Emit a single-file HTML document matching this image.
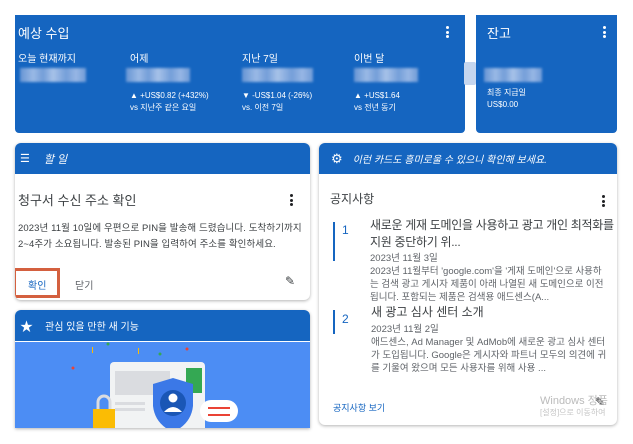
<!DOCTYPE html>
<html><head><meta charset="utf-8"><style>
*{margin:0;padding:0;box-sizing:border-box}
body{width:633px;height:444px;background:#fff;font-family:"Liberation Sans","Noto Sans CJK KR",sans-serif;position:relative;overflow:hidden;color:#202124}
.blue{background:#1565c0;color:#fff;position:absolute}
.card{position:absolute;background:#fff;border-radius:6px;box-shadow:0 1px 3px rgba(0,0,0,.3);overflow:hidden}
.hdr{background:#1565c0;color:#fff;height:31px;font-size:11px;font-style:italic;display:flex;align-items:center}
.abs{position:absolute}
.blur{position:absolute;height:14px;background:linear-gradient(90deg,#6f9ad6,#a9c3ea 20%,#7ea4db 35%,#b8cdee 50%,#7fa5dc 70%,#a6c0e9 85%,#7aa1da);filter:blur(1.2px);opacity:.9}
.dots{position:absolute;width:3px}
.dots i{display:block;width:3px;height:3px;border-radius:50%;background:currentColor;margin-bottom:1.5px}
.lbl{position:absolute;font-size:10px;color:#fff}
.sm{position:absolute;font-size:8px;line-height:12px;color:#fff}
</style></head><body>
<div class="blue" style="left:15px;top:15px;width:450px;height:118px;border-radius:0 0 4px 4px">
 <div class="abs" style="left:3px;top:8px;font-size:13px">예상 수입</div>
 <div class="dots" style="left:431px;top:11px;color:#fff"><i></i><i></i><i></i></div>
 <div class="lbl" style="left:3px;top:35px">오늘 현재까지</div>
 <div class="lbl" style="left:115px;top:35px">어제</div>
 <div class="lbl" style="left:227px;top:35px">지난 7일</div>
 <div class="lbl" style="left:339px;top:35px">이번 달</div>
 <div class="blur" style="left:5px;top:53px;width:66px"></div>
 <div class="blur" style="left:111px;top:53px;width:64px"></div>
 <div class="blur" style="left:227px;top:53px;width:71px"></div>
 <div class="blur" style="left:339px;top:53px;width:64px"></div>
 <div class="sm" style="left:115px;top:75px">▲ +US$0.82 (+432%)<br>vs 지난주 같은 요일</div>
 <div class="sm" style="left:227px;top:75px">▼ -US$1.04 (-26%)<br>vs. 이전 7일</div>
 <div class="sm" style="left:339px;top:75px">▲ +US$1.64<br>vs 전년 동기</div>
</div>
<div class="abs" style="left:464px;top:62px;width:12px;height:23px;background:#c5d6ef;border-radius:2px"></div>
<div class="blue" style="left:476px;top:15px;width:141px;height:118px;border-radius:0 0 4px 4px">
 <div class="abs" style="left:11px;top:8px;font-size:13px">잔고</div>
 <div class="dots" style="left:127px;top:11px;color:#fff"><i></i><i></i><i></i></div>
 <div class="blur" style="left:8px;top:53px;width:58px"></div>
 <div class="sm" style="left:11px;top:72px">최종 지급일<br>US$0.00</div>
</div>

<div class="card" style="left:15px;top:143px;width:295px;height:157px">
 <div class="hdr"><span style="margin-left:5px;font-style:normal;font-size:11px">☰</span><span style="margin-left:14px">할 일</span></div>
 <div class="abs" style="left:3px;top:47px;font-size:13px;color:#3c4043">청구서 수신 주소 확인</div>
 <div class="dots" style="left:275px;top:51px;color:#202124"><i></i><i></i><i></i></div>
 <div class="abs" style="left:3px;top:78px;font-size:9.5px;line-height:16px;color:#3c4043;width:285px;letter-spacing:0.1px">2023년 11월 10일에 우편으로 PIN을 발송해 드렸습니다. 도착하기까지 2~4주가 소요됩니다. 발송된 PIN을 입력하여 주소를 확인하세요.</div>
 <div class="abs" style="left:-2px;top:125px;width:47px;height:30px;border:3px solid #d4603f"></div>
 <div class="abs" style="left:13px;top:134px;font-size:10px;color:#1565c0">확인</div>
 <div class="abs" style="left:60px;top:134px;font-size:10px;color:#5f6368">닫기</div>
 <div class="abs" style="left:270px;top:131px;font-size:12px;color:#3c4043">✎</div>
</div>

<div class="card" style="left:15px;top:310px;width:295px;height:118px;border-radius:6px 6px 0 0">
 <div class="hdr" style="font-style:normal"><span style="margin-left:5px;font-size:13px">★</span><span style="margin-left:12px;font-size:10px">관심 있을 만한 새 기능</span></div>
 <div class="abs" style="left:0;top:32px;width:295px;height:86px;background:#4c8df4">
  <svg width="295" height="86" viewBox="0 0 295 86">
   <rect x="95" y="20" width="95" height="70" rx="4" fill="#f1f3f4"/>
   <rect x="100" y="29" width="55" height="24" fill="#dadce0"/>
   <rect x="171" y="26" width="16" height="25" fill="#34a853"/>
   <rect x="100" y="60" width="30" height="3" fill="#dadce0"/>
   <rect x="100" y="66" width="30" height="3" fill="#dadce0"/>
   <path d="M138 42 L158 36 L178 42 L178 64 Q176 82 158 90 Q140 82 138 64Z" fill="#3b78e7"/>
   <circle cx="158" cy="61" r="13" fill="#1a56b5"/>
   <circle cx="158" cy="56" r="4.5" fill="#fff"/>
   <path d="M149 70 Q158 60 167 70Z" fill="#fff"/>
   <path d="M83 68 V60 a6 6 0 0 1 12 0 V68" stroke="#dadce0" stroke-width="3" fill="none"/>
   <rect x="78" y="67" width="22" height="19" fill="#fbbc04"/>
   <rect x="185" y="58" width="38" height="22" rx="11" fill="#fff"/>
   <rect x="193" y="65" width="22" height="2" fill="#ea4335"/>
   <rect x="193" y="72" width="22" height="2" fill="#ea4335"/>
   <circle cx="172" cy="7" r="1.5" fill="#ea4335"/><circle cx="93" cy="2" r="1.5" fill="#34a853"/>
   <circle cx="58" cy="26" r="1.5" fill="#ea4335"/><circle cx="145" cy="12" r="1.5" fill="#34a853"/>
   <rect x="77" y="5" width="1" height="6" fill="#fbbc04"/><rect x="123" y="6" width="1" height="6" fill="#fbbc04"/>
  </svg>
 </div>
</div>

<div class="card" style="left:319px;top:143px;width:298px;height:282px">
 <div class="hdr"><span style="margin-left:12px;font-style:normal;font-size:13px">⚙</span><span style="margin-left:10px;font-size:10px">이런 카드도 흥미로울 수 있으니 확인해 보세요.</span></div>
 <div class="abs" style="left:11px;top:47px;font-size:12px;color:#3c4043">공지사항</div>
 <div class="dots" style="left:283px;top:52px;color:#202124"><i></i><i></i><i></i></div>
 <div class="abs" style="left:14px;top:79px;width:2px;height:39px;background:#1565c0"></div>
 <div class="abs" style="left:23px;top:80px;font-size:12px;color:#1565c0">1</div>
 <div class="abs" style="left:51px;top:74px;font-size:12px;line-height:17px;color:#3c4043;width:248px;letter-spacing:-0.3px">새로운 게재 도메인을 사용하고 광고 개인 최적화를 지원 중단하기 위...</div>
 <div class="abs" style="left:51px;top:109px;font-size:9.5px;line-height:13px;color:#5f6368;width:240px">2023년 11월 3일<br>2023년 11월부터 'google.com'을 '게재 도메인'으로 사용하는 검색 광고 게시자 제품이 아래 나열된 새 도메인으로 이전됩니다. 포함되는 제품은 검색용 애드센스(A...</div>
 <div class="abs" style="left:14px;top:167px;width:2px;height:24px;background:#1565c0"></div>
 <div class="abs" style="left:23px;top:169px;font-size:12px;color:#1565c0">2</div>
 <div class="abs" style="left:52px;top:160px;font-size:12px;color:#3c4043">새 광고 심사 센터 소개</div>
 <div class="abs" style="left:52px;top:180px;font-size:9.5px;line-height:13px;color:#5f6368;width:240px">2023년 11월 2일<br>애드센스, Ad Manager 및 AdMob에 새로운 광고 심사 센터가 도입됩니다. Google은 게시자와 파트너 모두의 의견에 귀를 기울여 왔으며 모든 사용자를 위해 사용 ...</div>
 <div class="abs" style="left:14px;top:258px;font-size:9px;color:#1565c0">공지사항 보기</div>
 <div class="abs" style="left:276px;top:252px;font-size:12px;color:#202124">✎</div>
</div>
<div class="abs" style="left:540px;top:392px;font-size:11px;color:#bbb">Windows 정품</div>
<div class="abs" style="left:540px;top:407px;font-size:8px;color:#c4c4c4">[설정]으로 이동하여</div>
</body></html>
